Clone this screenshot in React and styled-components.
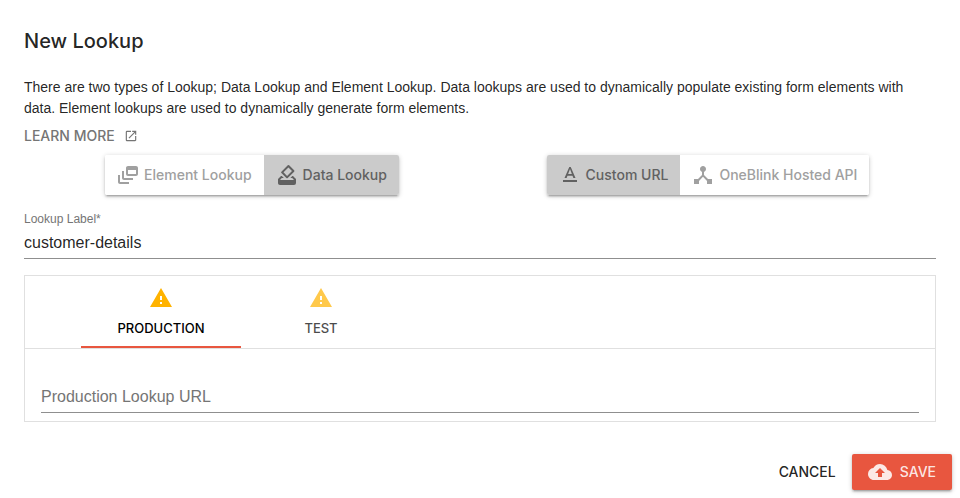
import React, { useState } from 'react';
import styled, { createGlobalStyle } from 'styled-components';
import {
    MdCloudUpload,
    MdDeviceHub,
    MdDynamicFeed,
    MdHowToVote,
    MdOpenInNew,
    MdTextFormat,
    MdWarning,
} from 'react-icons/md';

const GlobalStyle = createGlobalStyle`
    *{box-sizing:border-box;}
    body{
        margin:0;
        background-color:#fff;
        color:rgba(0,0,0,0.87);
        font-family:"Helvetica Neue","Liberation Sans",Arial,sans-serif;
    }
    button,input{font-family:inherit;}
`
const mediumFont = 'Inter,"Liberation Sans",sans-serif'

const Dialog = styled.form`
    display:flex;
    flex-direction:column;
`
const Title = styled.h2`
    margin:0;
    padding:25px 24px 20px;
    font-family:${mediumFont};
    font-size:20px;
    line-height:32px;
    font-weight:500;
`
const Content = styled.div`
    padding:0 24px;
`
const Description = styled.p`
    margin:0;
    font-size:14px;
    line-height:21px;
`
const LearnMore = styled.a`
    display:inline-flex;
    align-items:center;
    gap:9px;
    margin-top:5px;
    font-family:${mediumFont};
    font-size:14px;
    line-height:24px;
    font-weight:500;
    color:#757575;
    text-decoration:none;
    text-transform:uppercase;
`
const Options = styled.div`
    display:grid;
    grid-template-columns:1fr 1fr;
    justify-items:center;
    margin-top:7px;
`
const ToggleGroup = styled.div`
    display:flex;
    border-radius:2px;
    overflow:hidden;
    box-shadow:0 1px 5px rgba(0,0,0,0.2),0 2px 2px rgba(0,0,0,0.14),0 3px 1px -2px rgba(0,0,0,0.12);
`
const ToggleButton = styled.button`
    display:flex;
    align-items:center;
    gap:4px;
    height:40px;
    padding:0 12px 1px 11px;
    border:none;
    font-family:${mediumFont};
    font-size:14px;
    font-weight:500;
    cursor:pointer;
    color:${props => props.$selected ? '#616161' : '#a0a0a0'};
    background-color:${props => props.$selected ? '#cbcbcb' : '#fff'};
`
const Field = styled.div`
    display:flex;
    flex-direction:column;
    margin-top:${props => props.$top}px;
`
const Label = styled.label`
    font-size:12px;
    line-height:16px;
    color:#757575;
`
const Input = styled.input`
    width:100%;
    height:32px;
    padding:0;
    border:none;
    border-bottom:1px solid #8f8f8f;
    border-radius:0;
    outline:none;
    background:transparent;
    color:rgba(0,0,0,0.87);
    font-size:16px;
    &::placeholder{color:#757575;opacity:1;}
`
const Panel = styled.div`
    margin-top:16px;
    border:1px solid #e0e0e0;
`
const TabBar = styled.div`
    display:flex;
    padding-left:56px;
    border-bottom:1px solid #e0e0e0;
`
const Tab = styled.button`
    display:flex;
    flex-direction:column;
    align-items:center;
    gap:8px;
    width:160px;
    height:72px;
    padding:10px 12px 0;
    border:none;
    border-bottom:2px solid ${props => props.$selected ? '#e8563f' : 'transparent'};
    background:transparent;
    color:#000;
    font-family:${mediumFont};
    font-size:13px;
    line-height:20px;
    font-weight:500;
    text-transform:uppercase;
    cursor:pointer;
    opacity:${props => props.$selected ? 1 : 0.7};
    svg{color:#ffb300;}
`
const TabContent = styled.div`
    padding:0 16px 8px;
`
const Actions = styled.div`
    display:flex;
    justify-content:flex-end;
    gap:8px;
    margin-top:24px;
    padding:8px;
`
const Button = styled.button`
    display:flex;
    align-items:center;
    gap:8px;
    height:36px;
    padding:0 8px 1px;
    border:none;
    border-radius:2px;
    background:transparent;
    color:rgba(0,0,0,0.87);
    font-family:${mediumFont};
    font-size:14px;
    font-weight:500;
    text-transform:uppercase;
    cursor:pointer;
`
const SaveButton = styled(Button)`
    padding:0 16px 1px;
    background-color:#e8563f;
    color:rgba(255,255,255,0.87);
    box-shadow:0 1px 5px rgba(0,0,0,0.2),0 2px 2px rgba(0,0,0,0.14),0 3px 1px -2px rgba(0,0,0,0.12);
`

const lookupTypes = [
    { id: 'element', text: 'Element Lookup', Icon: MdDynamicFeed },
    { id: 'data', text: 'Data Lookup', Icon: MdHowToVote },
]
const sources = [
    { id: 'url', text: 'Custom URL', Icon: MdTextFormat },
    { id: 'api', text: 'OneBlink Hosted API', Icon: MdDeviceHub },
]
const environments = ['Production', 'Test']

function Toggle({ label, options, value, onChange }) {
    return (
        <ToggleGroup role="group" aria-label={label}>
            {options.map(({ id, text, Icon }) => (
                <ToggleButton
                    key={id}
                    type="button"
                    aria-pressed={value === id}
                    $selected={value === id}
                    onClick={() => onChange(id)}
                >
                    <Icon size={24} />
                    {text}
                </ToggleButton>
            ))}
        </ToggleGroup>
    )
}

export default function App() {
    const [type, setType] = useState('data')
    const [source, setSource] = useState('url')
    const [environment, setEnvironment] = useState('Production')
    const [name, setName] = useState('customer-details')
    const [urls, setUrls] = useState({ Production: '', Test: '' })

    return (
        <Dialog onSubmit={e => e.preventDefault()}>
            <GlobalStyle />
            <Title>New Lookup</Title>
            <Content>
                <Description>
                    There are two types of Lookup; Data Lookup and Element Lookup. Data lookups are used to dynamically populate existing form elements with data. Element lookups are used to dynamically generate form elements.
                </Description>
                <LearnMore href="#learn-more">Learn more <MdOpenInNew size={14} /></LearnMore>
                <Options>
                    <Toggle label="Lookup type" options={lookupTypes} value={type} onChange={setType} />
                    <Toggle label="Lookup source" options={sources} value={source} onChange={setSource} />
                </Options>
                <Field $top={16}>
                    <Label htmlFor="label">Lookup Label*</Label>
                    <Input id="label" value={name} onChange={e => setName(e.target.value)} />
                </Field>
                <Panel>
                    <TabBar role="tablist">
                        {environments.map(env => (
                            <Tab
                                key={env}
                                type="button"
                                role="tab"
                                aria-selected={environment === env}
                                $selected={environment === env}
                                onClick={() => setEnvironment(env)}
                            >
                                <MdWarning size={24} />
                                {env}
                            </Tab>
                        ))}
                    </TabBar>
                    <TabContent role="tabpanel">
                        <Field $top={32}>
                            <Input
                                aria-label={`${environment} Lookup URL`}
                                placeholder={`${environment} Lookup URL`}
                                value={urls[environment]}
                                onChange={e => setUrls({ ...urls, [environment]: e.target.value })}
                            />
                        </Field>
                    </TabContent>
                </Panel>
            </Content>
            <Actions>
                <Button type="button">Cancel</Button>
                <SaveButton type="submit"><MdCloudUpload size={24} />Save</SaveButton>
            </Actions>
        </Dialog>
    )
}
